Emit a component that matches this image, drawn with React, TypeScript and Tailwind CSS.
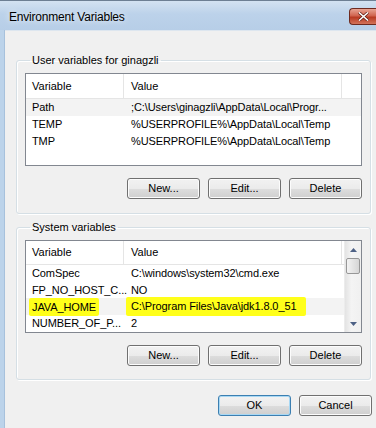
import React from 'react';

type Row = { name: string; value: string; selected?: boolean; marked?: boolean };

const userRows: Row[] = [
  { name: 'Path', value: ';C:\\Users\\ginagzli\\AppData\\Local\\Progr...', selected: true },
  { name: 'TEMP', value: '%USERPROFILE%\\AppData\\Local\\Temp' },
  { name: 'TMP', value: '%USERPROFILE%\\AppData\\Local\\Temp' },
];

const systemRows: Row[] = [
  { name: 'ComSpec', value: 'C:\\windows\\system32\\cmd.exe' },
  { name: 'FP_NO_HOST_C...', value: 'NO' },
  { name: 'JAVA_HOME', value: 'C:\\Program Files\\Java\\jdk1.8.0_51', selected: true, marked: true },
  { name: 'NUMBER_OF_P...', value: '2' },
];

function WinButton({ label, primary }: { label: string; primary?: boolean }) {
  return (
    <button
      className={`w-[73px] h-[21px] rounded-[3px] border text-[11px] leading-none text-black bg-[linear-gradient(to_bottom,#f2f2f2_0%,#ebebeb_50%,#dddddd_51%,#cfcfcf_100%)] ${
        primary ? 'border-[#3c7fb1] shadow-[inset_0_0_0_1px_#a8d8f4]' : 'border-[#707070] shadow-[inset_0_0_0_1px_#fcfcfc]'
      }`}
    >
      {label}
    </button>
  );
}

function Scrollbar() {
  return (
    <div className="w-[17px] h-full flex flex-col bg-[linear-gradient(to_right,#e3e3e3,#f4f4f4_40%,#f0f0f0)] border-l border-[#ececec]">
      <div className="h-[17px] flex items-center justify-center">
        <svg width="7" height="4" viewBox="0 0 7 4"><path d="M0 4 L3.5 0 L7 4 Z" fill="#4d6185" /></svg>
      </div>
      <div className="mx-[1px] h-[16px] rounded-[2px] border border-[#979797] bg-[linear-gradient(to_right,#f3f3f3,#e4e4e4_50%,#d6d6d6)]" />
      <div className="flex-1" />
      <div className="h-[17px] flex items-center justify-center">
        <svg width="7" height="4" viewBox="0 0 7 4"><path d="M0 0 L3.5 4 L7 0 Z" fill="#4d6185" /></svg>
      </div>
    </div>
  );
}

function VarList({ rows, scroll }: { rows: Row[]; scroll?: boolean }) {
  return (
    <div className="h-[93px] border border-[#828790] bg-white flex overflow-hidden">
      <div className="flex-1 flex flex-col">
        <div className="h-[25px] flex border-b border-[#e5e5e5] text-[11px] text-black">
          <div className="w-[98px] pl-[6px] flex items-center border-r border-[#e5e5e5]">Variable</div>
          <div className="w-[218px] pl-[7px] flex items-center border-r border-[#e5e5e5]">Value</div>
          <div className="flex-1" />
        </div>
        {rows.map((r) => (
          <div
            key={r.name}
            className={`h-[17px] flex items-center text-[11px] tracking-[-0.1px] text-black whitespace-nowrap ${r.selected ? 'bg-[#f3f3f3]' : ''}`}
          >
            <div className="w-[98px] pl-[6px]">
              {r.marked ? (
                <span className="inline-block -ml-[3px] px-[3px] h-[18px] leading-[18px] bg-[#ffff1a] rounded-[2px]">{r.name}</span>
              ) : (
                r.name
              )}
            </div>
            <div className="w-[218px] pl-[7px] overflow-hidden">
              {r.marked ? (
                <span className="inline-block -ml-[5px] pl-[5px] pr-[10px] h-[19px] leading-[19px] bg-[#ffff1a] rounded-[2px]">{r.value}</span>
              ) : (
                r.value
              )}
            </div>
          </div>
        ))}
      </div>
      {scroll && <Scrollbar />}
    </div>
  );
}

function Group({ title, rows, scroll, className }: { title: string; rows: Row[]; scroll?: boolean; className: string }) {
  return (
    <fieldset className={`border border-[#d5dfe5] rounded-[3px] shadow-[inset_1px_1px_0_#ffffff,1px_1px_0_#ffffff] px-[8px] ${className}`}>
      <legend className="ml-[5px] px-[2px] text-[11px] leading-[15px] text-black">{title}</legend>
      <div className="mt-[5px]">
        <VarList rows={rows} scroll={scroll} />
      </div>
      <div className="mt-[12px] flex justify-end gap-[8px]">
        <WinButton label="New..." />
        <WinButton label="Edit..." />
        <WinButton label="Delete" />
      </div>
    </fieldset>
  );
}

export default function App() {
  return (
    <div className="w-[376px] h-[428px] overflow-hidden flex flex-col bg-[#bcd3ea] font-['Liberation_Sans',Arial,sans-serif] border-t border-[#6d7f93]">
      {/* title bar */}
      <div className="h-[29px] flex items-center justify-between bg-[linear-gradient(to_bottom,#d3e2f1,#bcd2ea_45%,#b7cee7)]">
        <span className="pl-[9px] pt-[2px] text-[12px] tracking-[-0.2px] text-black [text-shadow:0_0_6px_#ffffff]">Environment Variables</span>
        <div className="w-[27px] h-[17px] mt-[2px] rounded-l-[4px] border border-r-0 border-[#6e2a1f] bg-[linear-gradient(to_bottom,#e8a493,#d0644f_45%,#b83a22_55%,#d3735a)] flex items-center justify-center">
          <svg width="11" height="9" viewBox="0 0 11 9">
            <path d="M1 0.5 L5.5 4.5 L10 0.5 M1 8.5 L5.5 4.5 L10 8.5" stroke="#5a1a10" strokeWidth="3" fill="none" />
            <path d="M1 0.5 L5.5 4.5 L10 0.5 M1 8.5 L5.5 4.5 L10 8.5" stroke="#ffffff" strokeWidth="1.6" fill="none" />
          </svg>
        </div>
      </div>
      <div className="flex-1 flex">
        {/* left frame */}
        <div className="w-[5px] border-r border-[#a7c1dc]" />
        <div className="flex-1 bg-[#f0f0f0] border-t border-[#dde6ef] flex flex-col">
          <Group title="User variables for ginagzli" rows={userRows} className="ml-[11px] mr-[5px] mt-[22px] pb-[14px]" />
          <Group title="System variables" rows={systemRows} scroll className="ml-[11px] mr-[5px] mt-[6px] pb-[13px]" />
          <div className="mt-[15px] mr-[4px] flex justify-end gap-[8px]">
            <WinButton label="OK" primary />
            <WinButton label="Cancel" />
          </div>
        </div>
      </div>
    </div>
  );
}
